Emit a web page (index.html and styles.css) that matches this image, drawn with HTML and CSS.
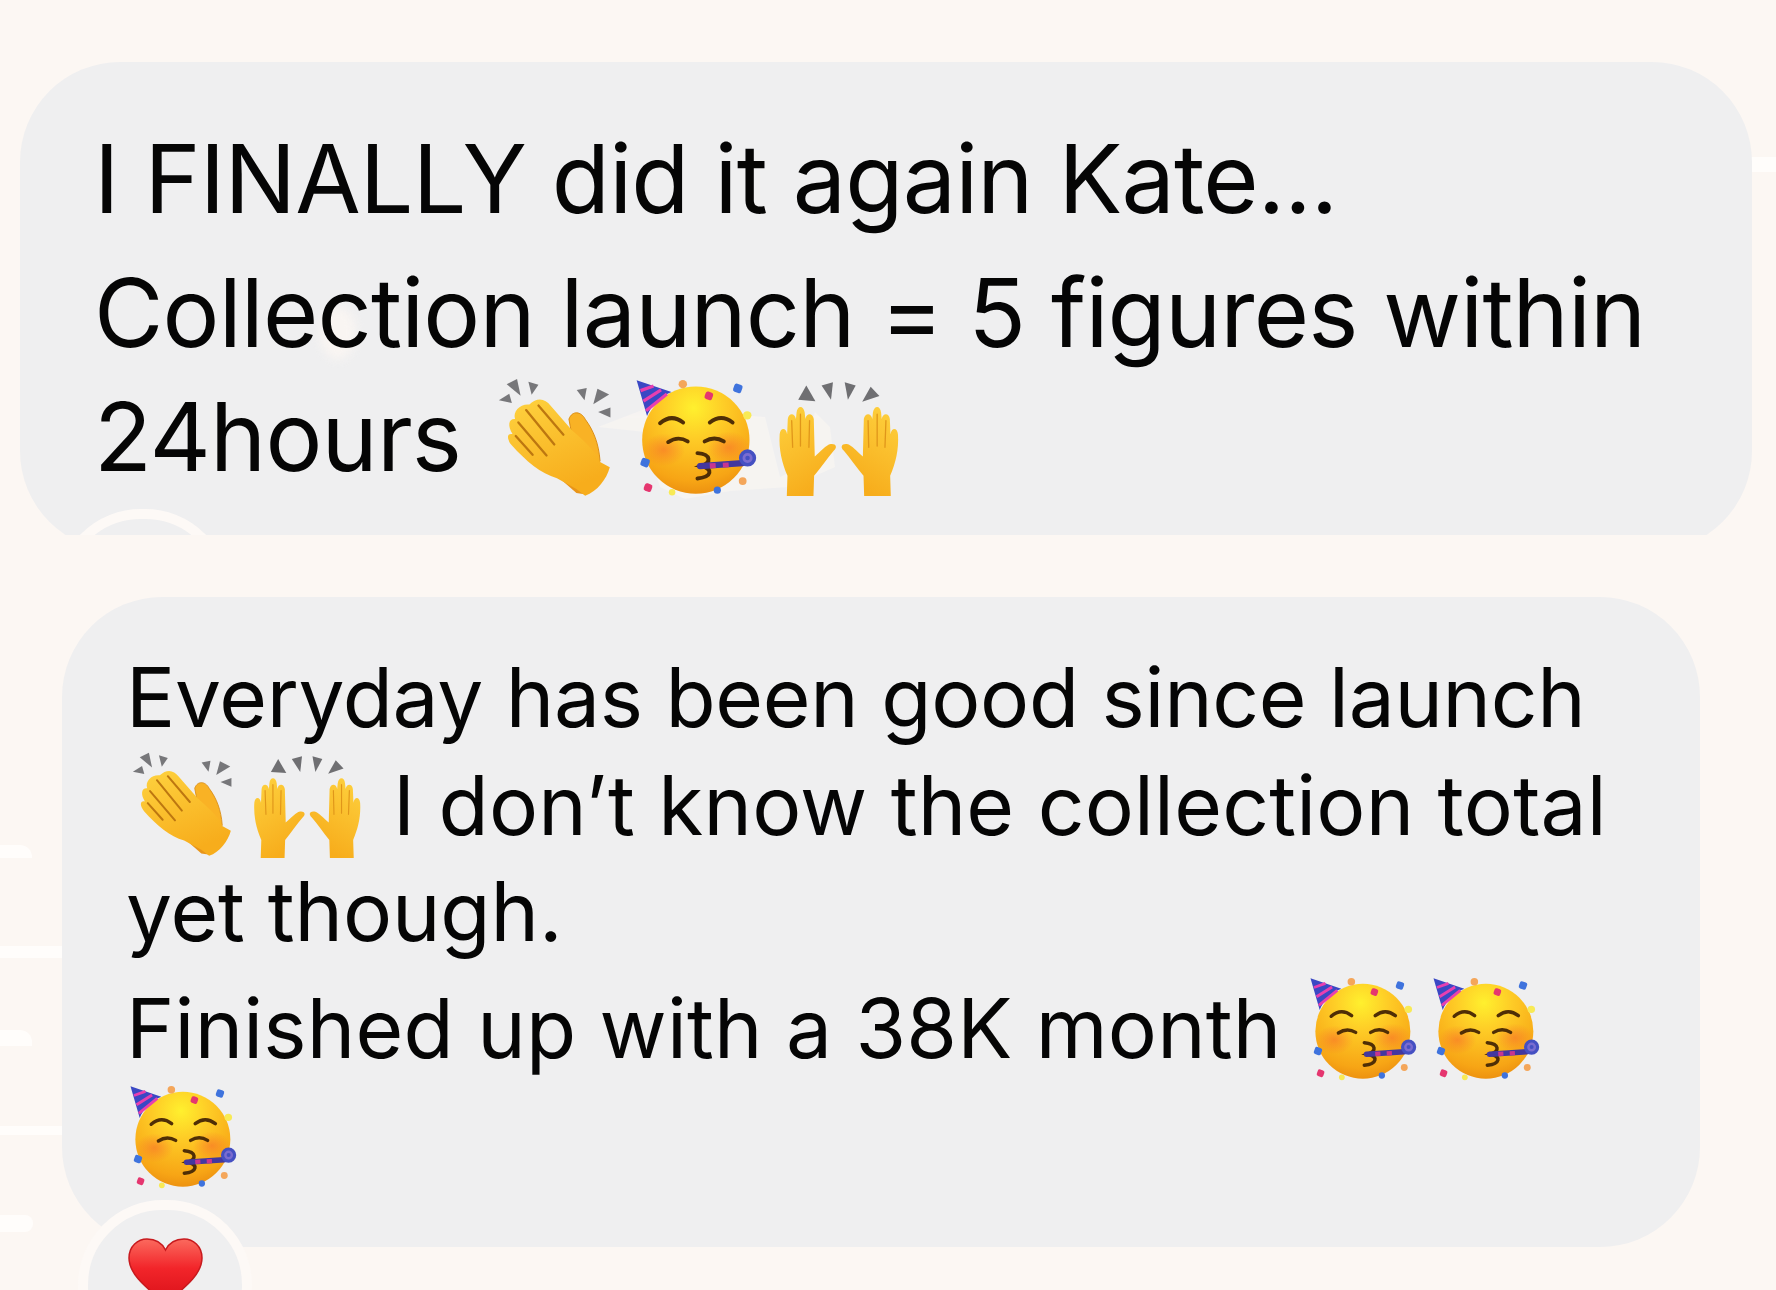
FILE: index.html
```html
<!DOCTYPE html>
<html lang="en">
<head>
<meta charset="utf-8">
<title>Messages</title>
<link rel="stylesheet" href="styles.css">
</head>
<body>
<svg class="defs" width="0" height="0" aria-hidden="true">
  <defs>
    <radialGradient id="faceG" cx="0.48" cy="0.2" r="0.85">
      <stop offset="0" stop-color="#fff02e"/>
      <stop offset="0.35" stop-color="#fecb26"/>
      <stop offset="0.8" stop-color="#f7a515"/>
      <stop offset="1" stop-color="#e98a0e"/>
    </radialGradient>
    <radialGradient id="cheekG">
      <stop offset="0" stop-color="#f8702a" stop-opacity="0.6"/>
      <stop offset="1" stop-color="#f8702a" stop-opacity="0"/>
    </radialGradient>
    <linearGradient id="handG" x1="0" y1="0" x2="0.4" y2="1">
      <stop offset="0" stop-color="#fed23f"/>
      <stop offset="1" stop-color="#f7ad1c"/>
    </linearGradient>
    <linearGradient id="heartG" x1="0" y1="0" x2="0" y2="1">
      <stop offset="0" stop-color="#fb6a5e"/>
      <stop offset="0.45" stop-color="#f2252a"/>
      <stop offset="1" stop-color="#d80f18"/>
    </linearGradient>

    <symbol id="party" viewBox="460 40 375 365">
      <circle cx="647" cy="232" r="165" fill="url(#faceG)"/>
      <ellipse cx="548" cy="262" rx="66" ry="50" fill="url(#cheekG)"/>
      <ellipse cx="748" cy="255" rx="66" ry="50" fill="url(#cheekG)"/>
      <path d="M465 48 L572 84 C535 98 510 125 497 158 Z" fill="#3a48c4"/>
      <path d="M477 80 L517 66 M486 112 L540 78 M494 142 L558 90" stroke="#e83fb0" stroke-width="10" fill="none"/>
      <g fill="none" stroke="#4f2e06" stroke-width="12" stroke-linecap="round">
        <path d="M537 180 Q572 150 608 178"/>
        <path d="M690 178 Q725 150 760 178"/>
        <path d="M562 238 Q592 218 622 236"/>
        <path d="M674 236 Q704 218 733 236"/>
        <path d="M652 272 C695 275 695 302 664 312 C700 320 698 345 652 350"/>
      </g>
      <path d="M660 312 L790 303" stroke="#43379f" stroke-width="19" stroke-linecap="round"/>
      <path d="M690 311 L708 310 M730 309 L748 308" stroke="#c83590" stroke-width="15"/>
      <circle cx="806" cy="287" r="21" fill="#7a6cd0" stroke="#4550c2" stroke-width="11"/>
      <circle cx="806" cy="287" r="7" fill="#4550c2"/>
      <g>
        <circle cx="607" cy="60" r="13" fill="#f4a65a"/>
        <rect x="675" y="84" width="24" height="24" rx="7" fill="#e5366f" transform="rotate(20 687 96)"/>
        <rect x="763" y="60" width="26" height="26" rx="7" fill="#3f73dd" transform="rotate(20 776 73)"/>
        <circle cx="805" cy="156" r="13" fill="#f8ea55"/>
        <rect x="478" y="288" width="26" height="26" rx="7" fill="#3f73dd" transform="rotate(20 491 301)"/>
        <circle cx="791" cy="358" r="12" fill="#f4a65a"/>
        <rect x="488" y="366" width="24" height="24" rx="7" fill="#e5366f" transform="rotate(20 500 378)"/>
        <circle cx="574" cy="392" r="10" fill="#f8ea55"/>
        <circle cx="713" cy="386" r="11" fill="#3f73dd"/>
      </g>
    </symbol>

    <symbol id="clap" viewBox="40 40 355 370">
      <g fill="#77777a">
        <path d="M46 112 L78 92 L86 120 Z"/>
        <path d="M70 62 L102 46 L113 98 Z"/>
        <path d="M137 55 L168 64 L147 95 Z"/>
        <path d="M286 80 L317 74 L310 112 Z"/>
        <path d="M337 124 L350 76 L386 94 Z"/>
        <path d="M352 148 L390 134 L390 165 Z"/>
      </g>
      <path d="M225 345 L285 398 L315 402 L345 330 L270 290 Z" fill="#e8951a"/>
      <path d="M262 170 C272 142 300 146 312 170 C338 205 354 245 358 300 L290 320 Z" fill="#f9b225" stroke="#d98c14" stroke-width="3"/>
      <path d="M140 125 C165 100 190 108 205 128 L272 205 C325 250 350 280 358 302 L388 318 C378 355 350 392 312 406 L285 385 L225 352 C175 338 130 300 85 250 C68 228 72 212 88 216 C72 190 76 168 96 170 C88 145 112 122 140 125 Z" fill="url(#handG)"/>
      <g fill="none" stroke="#bd7710" stroke-width="7" stroke-linecap="round">
        <path d="M168 128 L245 218"/>
        <path d="M130 142 L217 248"/>
        <path d="M106 180 L193 282"/>
        <path d="M98 222 L150 280"/>
      </g>
    </symbol>

    <symbol id="hands" viewBox="880 55 375 360">
      <g fill="#6f6f72">
        <path d="M945 116 L970 72 L998 120 Z"/>
        <path d="M1017 72 L1052 62 L1046 116 Z"/>
        <path d="M1088 62 L1122 72 L1098 116 Z"/>
        <path d="M1142 122 L1168 76 L1195 104 Z"/>
      </g>
      <g>
        <path d="M910 412 L912 350 C895 310 885 270 888 222 C890 200 908 200 911 222 L913 175 C915 155 935 155 938 175 L940 155 C942 132 962 132 965 155 L967 175 C970 155 990 155 993 175 L996 290 C1015 275 1030 255 1045 252 C1062 250 1066 262 1055 272 C1035 295 1015 325 994 350 L992 412 Z" fill="url(#handG)"/>
        <path d="M925 180 L928 262 M952 160 L952 258 M980 180 L978 262" stroke="#e0961a" stroke-width="4" fill="none" stroke-linecap="round"/>
      </g>
      <g transform="translate(2140 0) scale(-1 1)">
        <path d="M910 412 L912 350 C895 310 885 270 888 222 C890 200 908 200 911 222 L913 175 C915 155 935 155 938 175 L940 155 C942 132 962 132 965 155 L967 175 C970 155 990 155 993 175 L996 290 C1015 275 1030 255 1045 252 C1062 250 1066 262 1055 272 C1035 295 1015 325 994 350 L992 412 Z" fill="url(#handG)"/>
        <path d="M925 180 L928 262 M952 160 L952 258 M980 180 L978 262" stroke="#e0961a" stroke-width="4" fill="none" stroke-linecap="round"/>
      </g>
    </symbol>

    <symbol id="heart" viewBox="0 0 75 68">
      <path d="M37.5 66 C28 56 1 40 1 20 C1 8 10 1 19 1 C27 1 34 5 37.5 12 C41 5 48 1 56 1 C65 1 74 8 74 20 C74 40 47 56 37.5 66 Z" fill="url(#heartG)" stroke="#c81a1e" stroke-width="1.5"/>
    </symbol>
  </defs>
</svg>

<main class="page">
  <div class="streak streak-a"></div>
  <div class="streak streak-b"></div>
  <div class="streak streak-c"></div>
  <div class="streak streak-d"></div>
  <div class="streak streak-e"></div>
  <div class="streak streak-f"></div>

  <section class="clip">
    <div class="bubble bubble-one">
      <div class="smudge smudge-emoji"></div>
      <div class="smudge smudge-text"></div>
      <div class="line">I FINALLY did it again Kate...</div>
      <div class="line line-gap">Collection launch = 5 figures within</div>
      <div class="line">24hours<svg class="emo e-clap-l"><use href="#clap"/></svg><svg class="emo e-party-l"><use href="#party"/></svg><svg class="emo e-hands-l"><use href="#hands"/></svg></div>
      <div class="pill pill-one"></div>
    </div>
  </section>

  <section class="bubble bubble-two">
    <div class="line line-tight">Everyday has been good since launch</div>
    <div class="line line-loose"><svg class="emo e-clap-s"><use href="#clap"/></svg><svg class="emo e-hands-s"><use href="#hands"/></svg><span class="after-emo">I don’t know the collection total</span></div>
    <div class="line">yet though.</div>
    <div class="line line-gap line-loose">Finished up with a 38K month<svg class="emo e-party-s e-first"><use href="#party"/></svg><svg class="emo e-party-s e-next"><use href="#party"/></svg></div>
    <div class="line"><svg class="emo e-party-s e-solo"><use href="#party"/></svg></div>
    <div class="pill pill-two"><svg class="heart"><use href="#heart"/></svg></div>
  </section>
</main>
</body>
</html>
```
FILE: styles.css
```css
* { box-sizing: border-box; }
html, body { margin: 0; padding: 0; }
body { background: #fcf7f3; overflow: hidden; height: 1290px; }
.defs { position: absolute; }

.page {
  position: relative;
  height: 1290px;
  overflow: hidden;
  padding-top: 62px;
  display: flex;
  flex-direction: column;
  font-family: "Inter", "Liberation Sans", sans-serif;
  color: #050505;
}

.streak { position: absolute; background: #fffdfb; }
.streak-a { left: 0; top: 845px; width: 32px; height: 13px; border-top-right-radius: 12px; }
.streak-b { left: 0; top: 946px; width: 62px; height: 12px; }
.streak-c { left: 0; top: 1030px; width: 32px; height: 16px; border-top-right-radius: 12px; }
.streak-d { left: 0; top: 1126px; width: 62px; height: 9px; }
.streak-e { left: 0; top: 1215px; width: 33px; height: 17px; border-radius: 0 8px 8px 0; }
.streak-f { right: 0; top: 157px; width: 25px; height: 15px; }

.clip {
  margin: 0 24px 0 20px;
  height: 473px;
  overflow: hidden;
  flex: none;
}

.bubble {
  position: relative;
  background: #efeff0;
  border-radius: 100px;
}
.bubble-one {
  height: 489px;
  padding: 55px 0 0 74px;
  font-size: 95px;
  letter-spacing: -0.85px;
}
.bubble-one .line { height: 124px; line-height: 124px; }
.bubble-two {
  flex: none;
  margin: 62px 76px 0 62px;
  height: 650px;
  padding: 47px 0 0 64px;
  font-size: 82px;
  letter-spacing: -0.1px;
}
.bubble-two .line { height: 107px; line-height: 107px; }

.line { white-space: nowrap; filter: blur(0.5px); }
.line-tight { letter-spacing: -0.3px; }
.line-loose { letter-spacing: 0.2px; }
.bubble-one .line-gap { margin-top: 10px; }
.bubble-two .line-gap { margin-top: 10px; }

.smudge { position: absolute; background: #fcf7f3; filter: blur(5px); }
.smudge-emoji {
  left: 570px;
  top: 345px;
  width: 260px;
  height: 100px;
  opacity: 0.55;
  clip-path: polygon(8px 20px, 55px 25px, 60px 50px, 70px 80px, 95px 92px, 140px 84px, 200px 80px, 245px 60px, 240px 20px, 225px 5px, 210px 60px, 190px 70px, 175px 10px, 60px 0);
}
.smudge-text { left: 300px; top: 245px; width: 36px; height: 52px; border-radius: 50%; opacity: 0.8; }

.emo { display: inline-block; overflow: visible; }
.e-clap-l { width: 117px; height: 120px; margin-left: 35px; vertical-align: -26px; }
.e-party-l { width: 122px; height: 120px; margin-left: 22px; vertical-align: -26px; }
.e-hands-l { width: 126px; height: 117px; margin-left: 18px; vertical-align: -26px; }
.e-clap-s { width: 102px; height: 106px; margin-left: 5px; vertical-align: -22px; }
.e-hands-s { width: 109px; height: 105px; margin-left: 19px; vertical-align: -24px; }
.after-emo { margin-left: 32px; }
.e-party-s { width: 108px; height: 105px; vertical-align: -23px; }
.e-first { margin-left: 27px; }
.e-next { margin-left: 15px; }
.e-solo { margin-left: 3px; vertical-align: -24px; }

.pill {
  position: absolute;
  width: 174px;
  height: 170px;
  border: 10px solid #fdf9f6;
  border-radius: 87px;
  background: #efeff0;
}
.pill-one { left: 36px; top: 447px; }
.pill-two { left: 16px; top: 603px; display: flex; justify-content: center; padding-top: 28px; }
.heart { width: 75px; height: 68px; flex: none; }
```
